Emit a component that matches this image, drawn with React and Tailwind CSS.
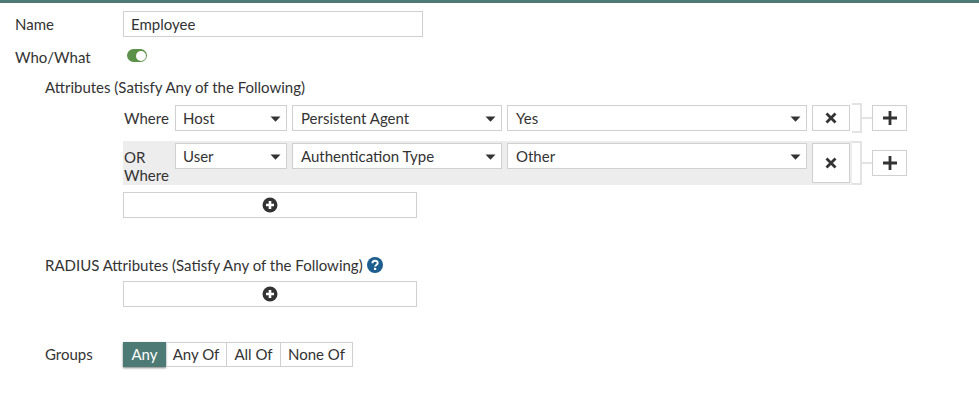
import React from 'react';

const BORDER = 'border border-[#d0d0d0]';

function Caret() {
  return (
    <svg width="11" height="6" viewBox="0 0 11 6" className="mt-[1px] shrink-0">
      <path d="M.5 .5h10L5.5 5.8z" fill="#333" />
    </svg>
  );
}

function Select({ value, width, inset = 'pl-[8px]' }) {
  return (
    <div className={`flex h-[26px] shrink-0 items-center justify-between bg-white pr-[5px] ${inset} ${BORDER} ${width}`}>
      <span>{value}</span>
      <Caret />
    </div>
  );
}

function CirclePlus() {
  return (
    <svg width="16" height="16" viewBox="0 0 16 16">
      <circle cx="8" cy="8" r="7.5" fill="#333" />
      <path d="M8 4v8M4 8h8" stroke="#fff" strokeWidth="2.6" />
    </svg>
  );
}

function AddBar() {
  return (
    <div className={`ml-[123px] flex h-[26px] w-[294px] items-center justify-center bg-white ${BORDER}`}>
      <CirclePlus />
    </div>
  );
}

function Row({ label, a, b, c, alt }) {
  return (
    <div className="flex">
      <div className={`flex w-[729px] shrink-0 gap-[5px] py-[2px] pr-[2px] ${alt ? 'h-[44px] bg-[#ededed]' : 'h-[30px]'}`}>
        <div className={`w-[47px] shrink-0 pl-[1px] leading-[18px] ${alt ? 'pt-[5px]' : 'pt-[4px]'}`}>
          {alt ? <>OR<br />Where</> : label}
        </div>
        <Select value={a} width="w-[112px]" inset="pl-[7px]" />
        <Select value={b} width="w-[210px]" />
        <Select value={c} width="w-[300px]" />
        <div className={`flex w-[38px] shrink-0 items-center justify-center bg-white ${BORDER}`}>
          <svg width="12" height="12" viewBox="0 0 12 12">
            <path d="M1.5 1.5l9 9M10.5 1.5l-9 9" stroke="#333" strokeWidth="2.8" />
          </svg>
        </div>
      </div>
      <div className="flex items-center">
        <div className="h-full w-[10px] border-y-2 border-r-2 border-[#e3e3e3]" />
        <div className="h-[2px] w-[10px] bg-[#e3e3e3]" />
        <div className={`flex h-[26px] w-[35px] items-center justify-center bg-white ${BORDER}`}>
          <svg width="16" height="16" viewBox="0 0 16 16">
            <path d="M8 1v14M1 8h14" stroke="#333" strokeWidth="2.8" />
          </svg>
        </div>
      </div>
    </div>
  );
}

export default function App() {
  return (
    <div className="h-[401px] w-[979px] overflow-hidden bg-white font-['Lato','Noto_Sans',sans-serif] text-[15px] text-[#333]">
      <div className="h-[3px] bg-[#4e7a76]" />

      <div className="mt-[8px] flex h-[26px] items-center pl-[15px]">
        <div className="w-[108px]">Name</div>
        <div className={`flex h-[26px] w-[300px] items-center px-[7px] ${BORDER}`}>Employee</div>
      </div>

      <div className="mt-[11px] flex h-[18px] items-center pl-[15px]">
        <div className="w-[112px]">Who/What</div>
        <div className="-mt-[3px] flex h-[13px] w-[20px] items-center justify-end rounded-full bg-[#5b9148] pr-[1px]">
          <div className="h-[10px] w-[10px] rounded-full bg-white" />
        </div>
      </div>

      <div className="mt-[12px] pl-[45px] leading-[18px]">Attributes (Satisfy Any of the Following)</div>

      <div className="mt-[7px] pl-[123px]">
        <Row label="Where" a="Host" b="Persistent Agent" c="Yes" />
        <div className="h-[8px]" />
        <Row alt a="User" b="Authentication Type" c="Other" />
      </div>

      <div className="mt-[7px]"><AddBar /></div>

      <div className="mt-[38px] flex items-center gap-[4px] pl-[45px] leading-[18px]">
        <span>RADIUS Attributes (Satisfy Any of the Following)</span>
        <svg width="16" height="16" viewBox="0 0 16 16">
          <circle cx="8" cy="8" r="8" fill="#1b5e8f" />
          <path d="M5.4 6.2c0-3.3 5.3-3.3 5.3-.2 0 2-2.6 1.9-2.6 3.6" fill="none" stroke="#fff" strokeWidth="1.9" />
          <rect x="7" y="10.8" width="2.2" height="2.2" fill="#fff" />
        </svg>
      </div>

      <div className="mt-[7px]"><AddBar /></div>

      <div className="mt-[35px] flex items-center pl-[45px]">
        <div className="w-[78px]">Groups</div>
        <div className="flex h-[25px]">
          <div className="flex w-[43px] items-center justify-center bg-[#4e7a76] text-white shadow-[0_1px_2px_rgba(0,0,0,0.5)]">Any</div>
          <div className={`flex w-[61px] items-center justify-center border-l-0 ${BORDER}`}>Any Of</div>
          <div className={`flex w-[54px] items-center justify-center border-l-0 ${BORDER}`}>All Of</div>
          <div className={`flex w-[72px] items-center justify-center border-l-0 ${BORDER}`}>None Of</div>
        </div>
      </div>
    </div>
  );
}
